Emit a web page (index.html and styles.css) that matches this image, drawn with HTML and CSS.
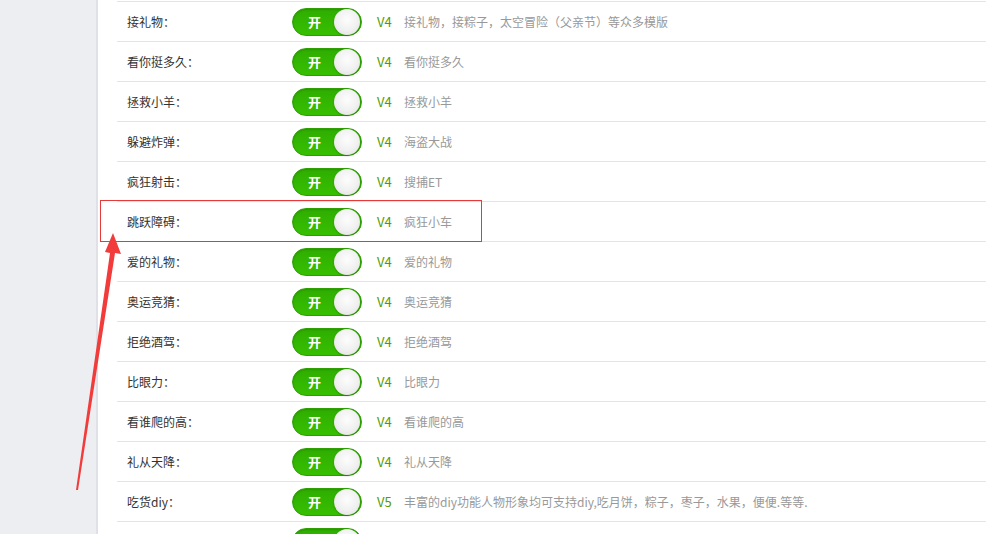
FILE: index.html
```html
<!DOCTYPE html>
<html>
<head>
<meta charset="utf-8">
<link rel="stylesheet" href="styles.css">
</head>
<body>
<div class="page">
  <aside class="sidebar"></aside>
  <main class="main">
    <ul class="list">
      <li class="row"><span class="label">接礼物：</span><span class="switch"><b>开</b><i></i></span><span class="ver">V4</span><span class="desc">接礼物，接粽子，太空冒险（父亲节）等众多模版</span></li>
      <li class="row"><span class="label">看你挺多久：</span><span class="switch"><b>开</b><i></i></span><span class="ver">V4</span><span class="desc">看你挺多久</span></li>
      <li class="row"><span class="label">拯救小羊：</span><span class="switch"><b>开</b><i></i></span><span class="ver">V4</span><span class="desc">拯救小羊</span></li>
      <li class="row"><span class="label">躲避炸弹：</span><span class="switch"><b>开</b><i></i></span><span class="ver">V4</span><span class="desc">海盗大战</span></li>
      <li class="row"><span class="label">疯狂射击：</span><span class="switch"><b>开</b><i></i></span><span class="ver">V4</span><span class="desc">搜捕ET</span></li>
      <li class="row"><span class="label">跳跃障碍：</span><span class="switch"><b>开</b><i></i></span><span class="ver">V4</span><span class="desc">疯狂小车</span></li>
      <li class="row"><span class="label">爱的礼物：</span><span class="switch"><b>开</b><i></i></span><span class="ver">V4</span><span class="desc">爱的礼物</span></li>
      <li class="row"><span class="label">奥运竞猜：</span><span class="switch"><b>开</b><i></i></span><span class="ver">V4</span><span class="desc">奥运竞猜</span></li>
      <li class="row"><span class="label">拒绝酒驾：</span><span class="switch"><b>开</b><i></i></span><span class="ver">V4</span><span class="desc">拒绝酒驾</span></li>
      <li class="row"><span class="label">比眼力：</span><span class="switch"><b>开</b><i></i></span><span class="ver">V4</span><span class="desc">比眼力</span></li>
      <li class="row"><span class="label">看谁爬的高：</span><span class="switch"><b>开</b><i></i></span><span class="ver">V4</span><span class="desc">看谁爬的高</span></li>
      <li class="row"><span class="label">礼从天降：</span><span class="switch"><b>开</b><i></i></span><span class="ver">V4</span><span class="desc">礼从天降</span></li>
      <li class="row"><span class="label">吃货diy：</span><span class="switch"><b>开</b><i></i></span><span class="ver">V5</span><span class="desc">丰富的diy功能人物形象均可支持diy,吃月饼，粽子，枣子，水果，便便.等等.</span></li>
      <li class="row row-partial"><span class="label"></span><span class="switch"><i></i></span></li>
    </ul>
  </main>
  <div class="highlight"></div>
  <svg class="arrow" width="986" height="534" viewBox="0 0 986 534">
    <polygon points="76,490 78,490 115,253 121,254 113,233 105,252 110,253" fill="#f23b3b"/>
  </svg>
</div>
</body>
</html>
```
FILE: styles.css
```css
html, body {
  margin: 0;
  padding: 0;
  background: #fff;
  overflow: hidden;
}
.page {
  position: relative;
  display: flex;
  width: 986px;
  height: 534px;
  overflow: hidden;
  font-family: "Microsoft YaHei", "Noto Sans CJK SC", sans-serif;
  font-size: 12px;
}
.sidebar {
  width: 96px;
  flex: none;
  background: #eceef2;
  border-right: 2px solid #dfe1e6;
}
.main {
  flex: 1;
  padding: 1px 0 0 19px;
}
.list {
  list-style: none;
  margin: 0;
  padding: 0;
}
.row {
  display: flex;
  align-items: center;
  height: 39px;
  border-top: 1px solid #e4e4e4;
}
.label {
  width: 165px;
  padding-left: 10px;
  flex: none;
  color: #333;
}
.switch {
  position: relative;
  flex: none;
  width: 68px;
  height: 26px;
  border: 1px solid #2e9f00;
  border-radius: 14px;
  background: linear-gradient(#2fae00, #37bf00);
  box-shadow: inset 0 1px 2px rgba(0,0,0,0.15);
}
.switch b {
  position: absolute;
  left: 15px;
  top: 0;
  line-height: 26px;
  color: #fff;
  font-size: 13px;
  font-weight: bold;
}
.switch i {
  position: absolute;
  right: 1px;
  top: 0;
  width: 26px;
  height: 26px;
  border-radius: 50%;
  background: radial-gradient(circle at 50% 40%, #fdfdfd 0, #f0f0f0 55%, #dcdcdc 100%);
  box-shadow: 0 1px 2px rgba(0,0,0,0.25);
}
.ver {
  margin-left: 15px;
  width: 27px;
  flex: none;
  color: #559c00;
  font-size: 13px;
}
.desc {
  color: #999;
}
.highlight {
  position: absolute;
  left: 100px;
  top: 200px;
  width: 380px;
  height: 40px;
  border: 1px solid #e63a3a;
}
.arrow {
  position: absolute;
  left: 0;
  top: 0;
  pointer-events: none;
}
```
